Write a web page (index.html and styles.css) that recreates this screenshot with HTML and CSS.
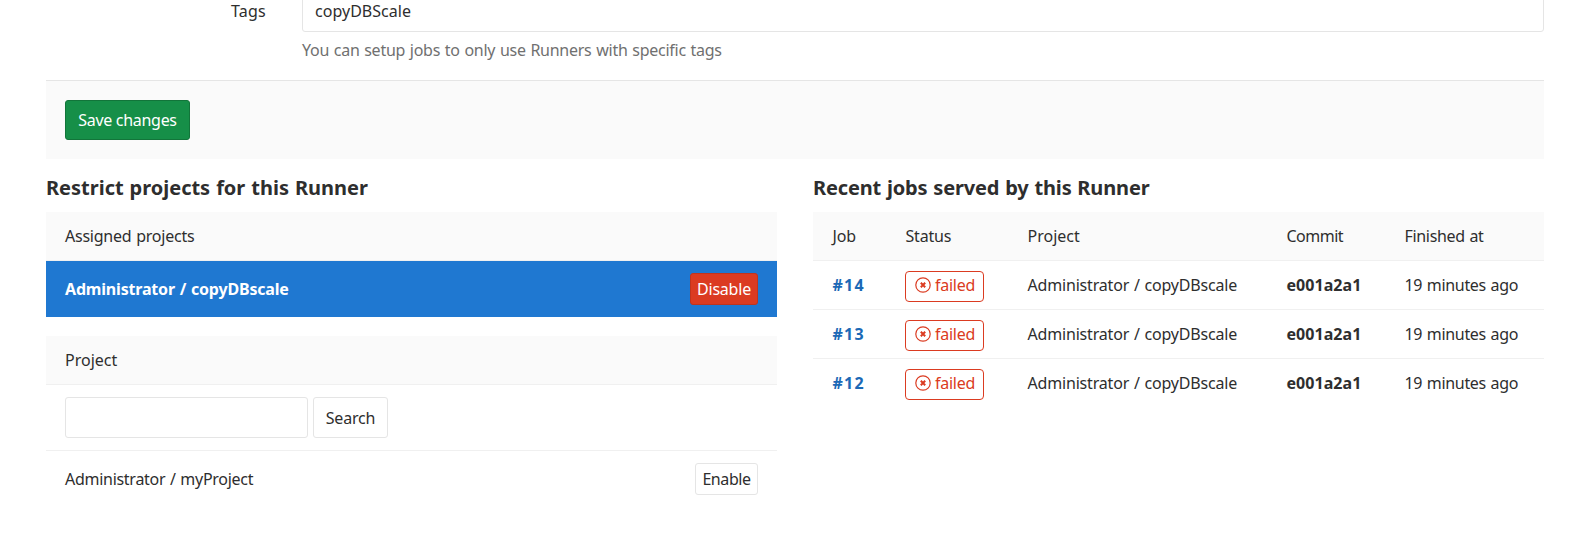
FILE: index.html
```html
<!DOCTYPE html>
<html lang="en">
<head>
<meta charset="utf-8">
<title>Runner</title>
<link rel="stylesheet" href="styles.css">
</head>
<body>
<svg class="sprite" width="0" height="0">
  <symbol id="status-failed" viewBox="0 0 16 16">
    <circle cx="8" cy="8" r="7.2" fill="none" stroke="currentColor" stroke-width="1.2"/>
    <path d="M5.8 5.8l4.4 4.4M10.2 5.8l-4.4 4.4" fill="none" stroke="currentColor" stroke-width="2"/>
  </symbol>
</svg>
<main class="page">
  <form>
    <div class="form-row">
      <label class="form-label" for="tags">Tags</label>
      <div class="form-field">
        <div class="tags-input" id="tags">copyDBScale</div>
        <p class="help">You can setup jobs to only use Runners with specific tags</p>
      </div>
    </div>
    <div class="form-actions">
      <button class="btn btn-save" type="button">Save changes</button>
    </div>
  </form>

  <div class="columns">
    <section>
      <h4 class="title title-projects">Restrict projects for this Runner</h4>
      <div class="panel">
        <div class="panel-head head-assigned">Assigned projects</div>
        <div class="project-row active">
          <strong>Administrator / copyDBscale</strong>
          <button class="btn btn-xs btn-danger" type="button">Disable</button>
        </div>
      </div>
      <div class="panel">
        <div class="panel-head">Project</div>
        <div class="search-row">
          <input class="search-input" type="text" aria-label="Search projects">
          <button class="btn btn-search" type="button">Search</button>
        </div>
        <div class="project-row">
          <span class="project-name">Administrator / myProject</span>
          <button class="btn btn-xs btn-enable" type="button">Enable</button>
        </div>
      </div>
    </section>

    <section>
      <h4 class="title title-jobs">Recent jobs served by this Runner</h4>
      <table class="jobs">
        <colgroup><col class="col-job"><col class="col-status"><col class="col-project"><col class="col-commit"><col></colgroup>
        <thead>
          <tr><th>Job</th><th>Status</th><th class="head-project">Project</th><th class="head-commit">Commit</th><th class="finished">Finished at</th></tr>
        </thead>
        <tbody>
          <tr>
            <td><a class="job-link">#14</a></td>
            <td class="status"><span class="badge"><svg class="icon"><use href="#status-failed"/></svg>failed</span></td>
            <td>Administrator / copyDBscale</td><td><strong class="sha">e001a2a1</strong></td><td class="finished">19 minutes ago</td>
          </tr>
          <tr>
            <td><a class="job-link">#13</a></td>
            <td class="status"><span class="badge"><svg class="icon"><use href="#status-failed"/></svg>failed</span></td>
            <td>Administrator / copyDBscale</td><td><strong class="sha">e001a2a1</strong></td><td class="finished">19 minutes ago</td>
          </tr>
          <tr>
            <td><a class="job-link">#12</a></td>
            <td class="status"><span class="badge"><svg class="icon"><use href="#status-failed"/></svg>failed</span></td>
            <td>Administrator / copyDBscale</td><td><strong class="sha">e001a2a1</strong></td><td class="finished">19 minutes ago</td>
          </tr>
        </tbody>
      </table>
    </section>
  </div>
</main>
</body>
</html>
```

FILE: styles.css
```css
* { box-sizing: border-box; }

body {
  margin: 0;
  background: #fff;
  color: #2e2e2e;
  font: 16px/24px "Noto Sans", "Open Sans", sans-serif;
  letter-spacing: -0.18px;
  word-spacing: 0.8px;
  overflow: hidden;
}

.sprite { display: block; }

.page { padding: 0 34px 0 46px; }

/* Runner form */
.form-row {
  display: flex;
  margin-top: -9px;
}

.form-label {
  width: 256px;
  padding: 8px 36px 0 0;
  text-align: right;
  letter-spacing: 0.25px;
}

.form-field { flex: 1; }

.tags-input {
  height: 41px;
  padding: 7px 12px;
  border: 1px solid #e5e5e5;
  border-radius: 3px;
  letter-spacing: 0.03px;
}

.help {
  margin: 6px 0 18px;
  color: #707070;
  letter-spacing: -0.26px;
}

.form-actions {
  height: 79px;
  padding: 19px;
  border-top: 1px solid #e5e5e5;
  background: #fafafa;
}

/* Buttons */
.btn {
  height: 41px;
  padding: 0;
  border: 1px solid #e5e5e5;
  border-radius: 3px;
  background: #fff;
  color: #2e2e2e;
  font: inherit;
  letter-spacing: -0.2px;
}

.btn-save {
  display: block;
  width: 125px;
  height: 40px;
  border-color: #12753a;
  background: #168f48;
  color: #fff;
  letter-spacing: -0.3px;
}

.btn-search { width: 75px; }

.btn-xs { height: 32px; }

.btn-danger {
  width: 68px;
  border-color: #c0341d;
  background: #db3b21;
  color: #fff;
}

.btn-enable {
  width: 63px;
  letter-spacing: -0.42px;
}

/* Two-column area */
.columns {
  display: grid;
  grid-template-columns: 731px 731px;
  gap: 36px;
}

.title {
  margin: 17px 0 12px;
  font-size: 20px;
  line-height: 24px;
  font-weight: 700;
}

.title-projects { letter-spacing: -0.01px; }
.title-jobs { letter-spacing: -0.15px; }

.panel { margin-bottom: 19px; }

.panel-head {
  height: 49px;
  padding: 12px 19px;
  border-bottom: 1px solid #f0f0f0;
  background: #fafafa;
  letter-spacing: 0;
}

.head-assigned { letter-spacing: -0.23px; }

.project-row {
  display: flex;
  align-items: center;
  justify-content: space-between;
  height: 56px;
  padding: 0 19px;
}

.project-row.active {
  background: #1f78d1;
  color: #fff;
}

.project-name { letter-spacing: -0.28px; }

.search-row {
  display: flex;
  gap: 5px;
  padding: 12px 19px;
  border-bottom: 1px solid #f0f0f0;
}

.search-input {
  width: 243px;
  height: 41px;
  padding: 0 12px;
  border: 1px solid #e5e5e5;
  border-radius: 3px;
  background: #fff;
  font: inherit;
}

/* Jobs table */
.jobs {
  width: 731px;
  table-layout: fixed;
  border-spacing: 0;
}

.col-job { width: 73px; }
.col-status { width: 122px; }
.col-project { width: 259px; }
.col-commit { width: 118px; }

.jobs th,
.jobs td {
  height: 49px;
  padding: 0 0 0 19.5px;
  border-bottom: 1px solid #f0f0f0;
  text-align: left;
  font-weight: 400;
  white-space: nowrap;
}

.jobs th { background: #fafafa; }
.jobs .status { padding-left: 19px; }
.jobs tbody tr:last-child td { border-bottom-color: transparent; }
.jobs .head-project { letter-spacing: 0; }
.jobs .head-commit { letter-spacing: -0.5px; }
.jobs .finished { letter-spacing: -0.32px; }

.job-link {
  color: #1b69b6;
  font-weight: 700;
  letter-spacing: 1.2px;
}

.sha {
  font-weight: 700;
  letter-spacing: 0.05px;
}

.badge {
  display: flex;
  align-items: center;
  gap: 4px;
  width: 79px;
  height: 31px;
  margin-top: 3px;
  padding: 0 0 3px 9px;
  border: 1px solid #db3b21;
  border-radius: 4px;
  color: #db3b21;
  line-height: 22px;
  letter-spacing: -0.25px;
}

.icon {
  width: 16px;
  height: 16px;
}
```
